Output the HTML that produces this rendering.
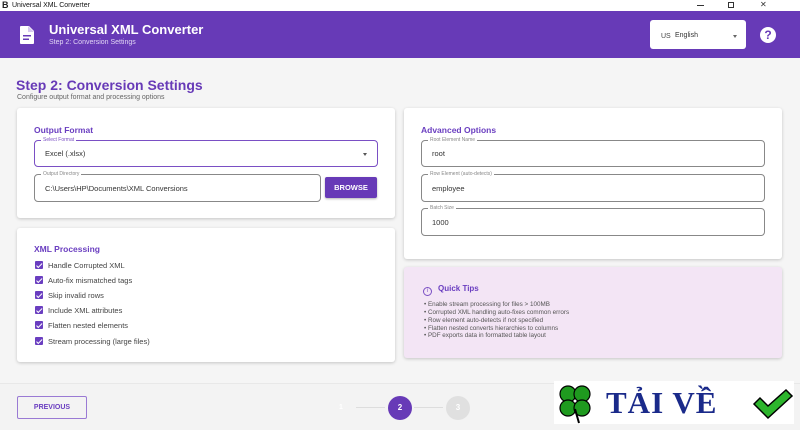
<!DOCTYPE html>
<html><head><meta charset="utf-8"><style>
*{box-sizing:border-box;margin:0;padding:0}
body{width:800px;height:430px;overflow:hidden;background:#f5f5f5;font-family:"Liberation Sans",Arial,sans-serif;position:relative;color:#333}
.abs{position:absolute}
.card{position:absolute;background:#fff;border-radius:3px;box-shadow:0 1px 3px rgba(0,0,0,.2)}
.h{position:absolute;color:#6a3ec0;font-weight:bold;font-size:8.5px}
.field{position:absolute;border:1px solid #888;border-radius:4px;font-size:7.5px;color:#333;padding-left:10px;display:flex;align-items:center}
.field .lb{position:absolute;top:-4px;left:6px;background:#fff;padding:0 2px;font-size:5px;color:#888;line-height:7px}
.cb{position:absolute;left:35px;width:8px;height:8px;background:#6a3ec0;border-radius:1px}
.cb:after{content:"";position:absolute;left:2.5px;top:0.5px;width:2px;height:4.5px;border:solid #fff;border-width:0 1.2px 1.2px 0;transform:rotate(45deg)}
.cl{position:absolute;left:48px;font-size:7.5px;color:#444}
.tip{position:absolute;left:424px;font-size:6.3px;color:#555}
</style></head><body>
<div class="abs" style="left:0;top:0;width:800px;height:11px;background:#fff;font-size:7px;line-height:11px;padding-left:12px;color:#111">Universal XML Converter</div>
<div class="abs" style="left:2px;top:1px;font-size:9px;font-weight:bold;line-height:9px;color:#222">B</div>
<div class="abs" style="left:760px;top:0;font-size:8px;color:#333">✕</div>
<div class="abs" style="left:728px;top:2px;width:6px;height:6px;border:1px solid #333"></div>
<div class="abs" style="left:697px;top:5px;width:7px;height:1px;background:#333"></div>
<div class="abs" style="left:0;top:11px;width:800px;height:47px;background:#673ab7"></div>
<svg class="abs" style="left:20px;top:26px" width="14" height="18" viewBox="0 0 14 18"><path d="M1 0h8l5 5v12a1 1 0 0 1-1 1H1a1 1 0 0 1-1-1V1a1 1 0 0 1 1-1z" fill="#fff"/><path d="M8 0v6h6" fill="#d7c8f0"/><rect x="3" y="9" width="8" height="1.5" fill="#673ab7"/><rect x="3" y="12.5" width="6" height="1.5" fill="#673ab7"/></svg>
<div class="abs" style="left:49px;top:22px;color:#fff;font-weight:bold;font-size:13px">Universal XML Converter</div>
<div class="abs" style="left:49px;top:39px;color:#e0d4f4;font-size:7px">Step 2: Conversion Settings</div>
<div class="abs" style="left:650px;top:20px;width:96px;height:29px;background:#fff;border-radius:3px"></div>
<div class="abs" style="left:661px;top:33px;font-size:7px;color:#444">US</div>
<div class="abs" style="left:675px;top:32px;font-size:7px;color:#333">English</div>
<div class="abs" style="left:733px;top:35px;border:2.5px solid transparent;border-top:3px solid #666"></div>
<div class="abs" style="left:760px;top:27px;width:16px;height:16px;border-radius:50%;background:#fff;color:#673ab7;font-weight:bold;font-size:12px;text-align:center;line-height:16px">?</div>
<div class="abs" style="left:16px;top:77px;color:#673ab7;font-weight:bold;font-size:14px">Step 2: Conversion Settings</div>
<div class="abs" style="left:17px;top:94px;color:#666;font-size:7px">Configure output format and processing options</div>

<div class="card" style="left:17px;top:108px;width:378px;height:110px"></div>
<div class="h" style="left:34px;top:125px">Output Format</div>
<div class="field" style="left:34px;top:140px;width:344px;height:27px;border:1.5px solid #7a4fc4">Excel (.xlsx)<span class="lb" style="color:#7a4fc4">Select Format</span></div>
<div class="abs" style="left:363px;top:153px;border:2.5px solid transparent;border-top:3px solid #555"></div>
<div class="field" style="left:34px;top:174px;width:287px;height:28px">C:\Users\HP\Documents\XML Conversions<span class="lb">Output Directory</span></div>
<div class="abs" style="left:325px;top:177px;width:52px;height:21px;background:#673ab7;border-radius:2px;color:#fff;font-weight:bold;font-size:7.5px;text-align:center;line-height:21px;box-shadow:0 1px 2px rgba(0,0,0,.3)">BROWSE</div>

<div class="card" style="left:17px;top:228px;width:378px;height:134px"></div>
<div class="h" style="left:34px;top:244px">XML Processing</div>
<div class="cb" style="top:261px"></div><div class="cl" style="top:261px">Handle Corrupted XML</div>
<div class="cb" style="top:276px"></div><div class="cl" style="top:276px">Auto-fix mismatched tags</div>
<div class="cb" style="top:291px"></div><div class="cl" style="top:291px">Skip invalid rows</div>
<div class="cb" style="top:306px"></div><div class="cl" style="top:306px">Include XML attributes</div>
<div class="cb" style="top:321px"></div><div class="cl" style="top:321px">Flatten nested elements</div>
<div class="cb" style="top:337px"></div><div class="cl" style="top:337px">Stream processing (large files)</div>

<div class="card" style="left:404px;top:108px;width:378px;height:151px"></div>
<div class="h" style="left:421px;top:125px">Advanced Options</div>
<div class="field" style="left:421px;top:140px;width:344px;height:27px">root<span class="lb">Root Element Name</span></div>
<div class="field" style="left:421px;top:174px;width:344px;height:28px">employee<span class="lb">Row Element (auto-detects)</span></div>
<div class="field" style="left:421px;top:208px;width:344px;height:28px">1000<span class="lb">Batch Size</span></div>

<div class="card" style="left:404px;top:267px;width:378px;height:91px;background:#f3e5f5"></div>
<div class="abs" style="left:423px;top:287px;width:9px;height:9px;border:1px solid #7a4fc4;border-radius:50%;font-size:6px;color:#7a4fc4;text-align:center;line-height:7px">i</div>
<div class="h" style="left:438px;top:284px;font-size:8px">Quick Tips</div>
<div class="tip" style="top:301px">• Enable stream processing for files &gt; 100MB</div>
<div class="tip" style="top:309px">• Corrupted XML handling auto-fixes common errors</div>
<div class="tip" style="top:317px">• Row element auto-detects if not specified</div>
<div class="tip" style="top:325px">• Flatten nested converts hierarchies to columns</div>
<div class="tip" style="top:332px">• PDF exports data in formatted table layout</div>

<div class="abs" style="left:0;top:383px;width:800px;height:47px;background:#f3f3f3;border-top:1px solid #e8e8e8"></div>
<div class="abs" style="left:17px;top:396px;width:70px;height:23px;border:1px solid #9a7ad4;border-radius:2px;color:#6a3ec0;font-weight:bold;font-size:7px;text-align:center;line-height:21px">PREVIOUS</div>
<div class="abs" style="left:339px;top:404px;font-size:7px;color:#fff;font-weight:bold">1</div>
<div class="abs" style="left:356px;top:407px;width:29px;height:1px;background:#ddd"></div>
<div class="abs" style="left:388px;top:396px;width:24px;height:24px;border-radius:50%;background:#673ab7;color:#fff;font-weight:bold;font-size:8px;text-align:center;line-height:24px">2</div>
<div class="abs" style="left:414px;top:407px;width:29px;height:1px;background:#ddd"></div>
<div class="abs" style="left:446px;top:396px;width:24px;height:24px;border-radius:50%;background:#e0e0e0;color:#fff;font-weight:bold;font-size:8px;text-align:center;line-height:24px">3</div>

<div class="abs" style="left:554px;top:381px;width:240px;height:43px;background:#fff"></div>
<svg class="abs" style="left:555px;top:381px" width="40" height="44" viewBox="0 0 40 44"><g fill="#1f9a1f" stroke="#000" stroke-width="1.2"><circle cx="13" cy="13" r="8"/><circle cx="27" cy="13" r="8"/><circle cx="13" cy="27" r="8"/><circle cx="27" cy="27" r="8"/></g><path d="M20 28l4 14" stroke="#000" stroke-width="2"/></svg>
<div class="abs" style="left:606px;top:383px;font-family:'Liberation Serif',serif;font-weight:bold;font-size:31px;color:#1a2a8a;letter-spacing:1px;line-height:40px">TẢI VỀ</div>
<svg class="abs" style="left:752px;top:388px" width="42" height="32" viewBox="0 0 42 32"><path d="M2 16l6-6 8 8L34 2l6 6-24 22z" fill="#2db52d" stroke="#000" stroke-width="1.5"/></svg>
</body></html>
